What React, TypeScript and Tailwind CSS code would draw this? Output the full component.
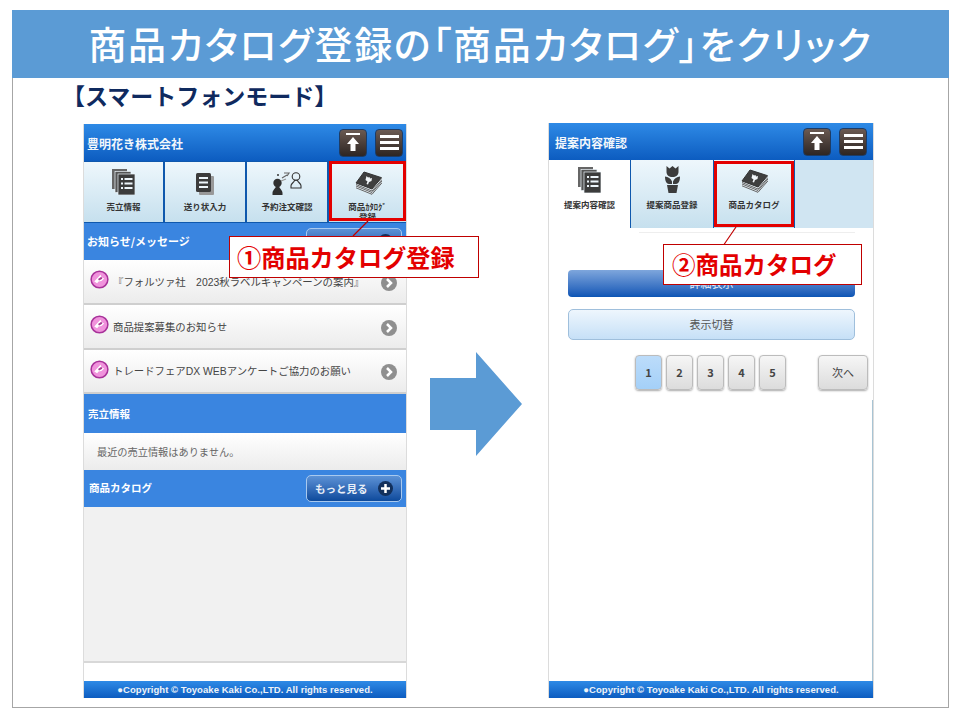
import React from 'react';

const JP = "font-['Noto_Sans_CJK_JP','Noto_Sans',sans-serif]";

const PagesIcon = () => (
  <svg width="23" height="26" viewBox="0 0 23 26">
    <rect x="0" y="0" width="15" height="20" fill="#666" />
    <rect x="3" y="2.500" width="16" height="21" fill="#555" stroke="#eef6fb" strokeWidth="0.7" />
    <rect x="6" y="5" width="17" height="21" fill="#3c3c3c" stroke="#eef6fb" strokeWidth="0.7" />
    <g fill="#eef6fb">
      <rect x="9" y="9" width="2" height="2" />
      <rect x="12.500" y="9" width="8" height="2" />
      <rect x="9" y="13.500" width="2" height="2" />
      <rect x="12.500" y="13.500" width="8" height="2" />
      <rect x="9" y="18" width="2" height="2" />
      <rect x="12.500" y="18" width="8" height="2" />
    </g>
  </svg>
);

const DocIcon = () => (
  <svg width="18" height="22" viewBox="0 0 18 22">
    <rect x="3" y="3" width="15" height="19" rx="1" fill="#999" />
    <rect x="0" y="0" width="15" height="19" rx="1.500" fill="#3c3c3c" />
    <g fill="#eef6fb">
      <rect x="3" y="4" width="9" height="2" />
      <rect x="3" y="8.500" width="9" height="2" />
      <rect x="3" y="13" width="9" height="2" />
    </g>
  </svg>
);

const PeopleIcon = () => (
  <svg width="30" height="24" viewBox="0 0 30 24">
    <circle cx="5.500" cy="12" r="4.200" fill="#2f2f2f" />
    <path d="M4 15h3c.3 2.500 3.500 4 3.500 7v2H.500v-2c0-3 3.200-4.500 3.500-7z" fill="#2f2f2f" />
    <circle cx="24" cy="5.500" r="3.800" fill="none" stroke="#333" strokeWidth="1.100" />
    <path d="M22.500 9.300h3c.3 2 3.500 3.200 3.500 5.500V17H19v-2.200c0-2.300 3.200-3.500 3.500-5.500z" fill="none" stroke="#333" strokeWidth="1.100" />
    <circle cx="6" cy="4" r="1" fill="#333" />
    <path d="M10 7l5-3M12 2l5 0-2 3" fill="none" stroke="#666" strokeWidth="1.200" />
    <path d="M9 10l5-2" fill="none" stroke="#999" strokeWidth="1.200" />
  </svg>
);

const BookIcon = () => (
  <svg width="28" height="24" viewBox="0 0 28 24">
    <path d="M2 12v5l16 6.500L28 12V7z" fill="#e9f1f6" />
    <path d="M2 13.500 18 20 28 8.500M2 15 18 21.500 28 10M2 16.800 18 23.300 28 11.800" fill="none" stroke="#555" strokeWidth="0.900" />
    <path d="M10 1 27.600 6.700 18 18 2 12z" fill="#3f3f3f" stroke="#333" strokeWidth="1" strokeLinejoin="round" />
    <path d="M12.500 5l1.500 1.500 1.500-.5.500 1.500 2-.5-.5 3-2.500 1-1 2.500-1.500-.5 1-2.500-2-1.500z" fill="#f3f7fa" />
  </svg>
);

const TulipIcon = () => (
  <svg width="15" height="27" viewBox="0 0 15 27" fill="#3c3c3c">
    <path d="M1.500 0l3 2.500L7.500 0l3 2.500 3-2.500v6c0 3-2.500 5-6 5s-6-2-6-5z" />
    <path d="M0 10.500c3 .3 6 2 7 5V18H4c-3 0-4-4-4-7.500zM15 10.500c-3 .3-6 2-7 5V18h3c3 0 4-4 4-7.500z" />
    <path d="M2 19h11l-1.500 8h-8z" />
  </svg>
);

const ArrowUpButton = () => (
  <span className="flex h-[28px] w-[28px] flex-col items-center justify-center rounded-[4px] border border-[#1d3c66] bg-gradient-to-b from-[#6b5a52] to-[#2e2623]">
    <svg width="16" height="20" viewBox="0 0 16 20" fill="#fff">
      <rect x="1" y="0" width="14" height="2" />
      <path d="M8 4l6 7h-3.500v7h-5v-7H2z" />
    </svg>
  </span>
);

const MenuButton = () => (
  <span className="flex h-[28px] w-[28px] flex-col items-center justify-center gap-[3px] rounded-[4px] border border-[#1d3c66] bg-gradient-to-b from-[#6b5a52] to-[#2e2623]">
    <span className="h-[3px] w-[19px] bg-white" />
    <span className="h-[3px] w-[19px] bg-white" />
    <span className="h-[3px] w-[19px] bg-white" />
  </span>
);

const Header = ({ title, className }: { title: string; className: string }) => (
  <div className={`flex h-[37px] items-center justify-between bg-gradient-to-b from-[#2e8ae6] to-[#0c5cc0] ${className}`}>
    <span className="pt-[3px] text-[12px] font-bold text-[#f3f7fb]">{title}</span>
    <div className="flex gap-[8px]">
      <ArrowUpButton />
      <MenuButton />
    </div>
  </div>
);

const Tab = ({ label, icon, className, active }: { label: React.ReactNode; icon: React.ReactNode; className: string; active?: boolean }) => (
  <div className={`flex flex-col items-center ${active ? 'bg-white' : 'bg-gradient-to-b from-[#eef7fc] to-[#c6e0ee]'} ${className}`}>
    <div className="flex h-[29px] items-end">{icon}</div>
    <div className="mt-[6px] text-center text-[8.500px] leading-[11px] font-bold text-[#333]">{label}</div>
  </div>
);

const Bullet = () => (
  <svg width="19" height="19" viewBox="0 0 20 20" className="shrink-0">
    <circle cx="10" cy="10" r="8.800" fill="#f093dc" stroke="#a8329a" strokeWidth="1.600" />
    <path d="M4.500 12 11 5l1.500 3 2.500 1-3 2.500-3 .5-1.500 2z" fill="#fff" />
    <path d="M8.500 9.500l3.500-2.500 1 2.300-3.500 1.700z" fill="#a63a92" />
  </svg>
);

const Chevron = () => (
  <svg width="16" height="16" viewBox="0 0 16 16" className="mt-[2px] shrink-0">
    <circle cx="8" cy="8" r="8" fill="#8f8f8f" />
    <path d="M6 4l4 4-4 4" fill="none" stroke="#fff" strokeWidth="2.500" />
  </svg>
);

const NoticeRow = ({ text, className }: { text: string; className: string }) => (
  <div className={`flex items-center border-b-2 border-[#cfcfcf] bg-gradient-to-b from-white to-[#ececec] pr-[9px] pl-[6px] ${className}`}>
    <div className="-mt-[4px]"><Bullet /></div>
    <span className="ml-[4px] flex-1 pt-[2px] font-['Liberation_Sans','Noto_Sans_CJK_JP',sans-serif] text-[10.400px] whitespace-pre text-[#444]">{text}</span>
    <Chevron />
  </div>
);

const MoreButton = () => (
  <span className="flex h-[27px] w-[96px] items-center justify-between rounded-[5px] border border-[#a9c9ee] bg-gradient-to-b from-[#5c92d6] to-[#0c4a9c] pr-[8px] pl-[8px] text-[10.500px] text-[#e8eff8]">
    <span>もっと見る</span>
    <svg width="15" height="15" viewBox="0 0 15 15">
      <circle cx="7.500" cy="7.500" r="7.500" fill="#12305c" />
      <path d="M7.500 3v9M3 7.500h9" stroke="#fff" strokeWidth="2.500" />
    </svg>
  </span>
);

const Footer = () => (
  <div className="flex h-[17px] items-center justify-center bg-gradient-to-b from-[#2e8ae6] to-[#0c5cc0] pt-[2px] font-['Liberation_Sans',sans-serif] text-[9.500px] font-bold tracking-[0.05px] text-[#eef3f8]">
    ●Copyright © Toyoake Kaki Co.,LTD. All rights reserved.
  </div>
);

const Callout = ({ text, className }: { text: string; className: string }) => (
  <div className={`absolute flex items-center border border-[#c00000] bg-white font-bold text-[#e30000] ${className}`}>
    {text}
  </div>
);

const PageButton = ({ label, active }: { label: string; active?: boolean }) => (
  <span className={`flex h-[35px] w-[27px] items-center justify-center rounded-[4px] border border-[#bcbcbc] text-[11px] font-bold text-[#444] shadow-[0_1px_2px_#aaa] ${active ? 'bg-gradient-to-b from-[#bcdcfa] to-[#a4d0f8]' : 'bg-gradient-to-b from-[#f6f6f6] to-[#dcdcdc]'}`}>
    {label}
  </span>
);

export default function App() {
  return (
    <div className={`h-[720px] w-[960px] bg-white pt-[10px] pl-[12px] ${JP}`}>
      <div className="h-[698px] w-[937px] border-x border-b border-[#a6a6a6]">
        <div className="-mx-px flex h-[68px] items-center justify-center bg-[#5b9bd5] pb-[3px] text-[38px] font-medium tracking-[1.700px] text-white [font-feature-settings:'palt']">
          商品カタログ登録の「商品カタログ」をクリック
        </div>
        <div className="h-[45px] pl-[49px] text-[23px] leading-[34px] font-bold text-[#0f2a5f]">【スマートフォンモード】</div>

        <div className="flex h-[575px] items-start pl-[70px]">
          {/* left phone */}
          <div className="relative mt-px flex h-[574px] w-[324px] flex-col border-x border-[#dcdcdc]">
            <Header title="豊明花き株式会社" className="pr-[3px] pl-[3px]" />
            <div className="flex h-[62px] gap-[2px] bg-[#0f58ad] pt-px pb-px">
              <Tab label="売立情報" icon={<PagesIcon />} className="w-[79px] pt-[4px]" />
              <Tab label="送り状入力" icon={<DocIcon />} className="w-[80px] pt-[4px]" />
              <Tab label="予約注文確認" icon={<PeopleIcon />} className="w-[80px] pt-[4px]" />
              <Tab label={<>商品ｶﾀﾛｸﾞ<br /><span className="block -mt-px">登録</span></>} icon={<BookIcon />} className="flex-1 pt-[4px]" />
            </div>
            <div className="flex h-[37px] items-center justify-between bg-[#3a85e0] pr-[4px] pl-[3px] text-[11px] font-bold text-white">
              <span>お知らせ/メッセージ</span>
              <MoreButton />
            </div>
            <NoticeRow text="『フォルツァ社　2023秋ラベルキャンペーンの案内』" className="h-[45px]" />
            <NoticeRow text="商品提案募集のお知らせ" className="h-[45px]" />
            <NoticeRow text="トレードフェアDX WEBアンケートご協力のお願い" className="h-[44px]" />
            <div className="flex h-[39px] items-center bg-[#3a85e0] pl-[4px] text-[10.500px] font-bold text-white">売立情報</div>
            <div className="flex h-[37px] items-center bg-gradient-to-b from-white to-[#ececec] pl-[13px] text-[10.200px] text-[#666]">最近の売立情報はありません。</div>
            <div className="flex h-[37px] items-center justify-between bg-[#3a85e0] pr-[4px] pl-[5px] text-[10.500px] font-bold text-white">
              <span className="-mt-[2px]">商品カタログ</span>
              <MoreButton />
            </div>
            <div className="h-[156px] border-b-2 border-[#d8d8d8] bg-[#f1f1f1]" />
            <div className="flex-1 bg-white" />
            <Footer />

            {/* red highlight and callout */}
            <div className="absolute top-[37px] left-[245px] h-[60px] w-[77px] border-[3px] border-[#e30000]" />
            <svg width="30" height="20" viewBox="0 0 30 20" className="absolute top-[96px] left-[263px]">
              <line x1="21" y1="1" x2="6" y2="16" stroke="#c00000" strokeWidth="1.200" />
            </svg>
            <Callout text="①商品カタログ登録" className="top-[112px] left-[145px] h-[42px] w-[250px] pl-[7px] text-[24.200px]" />
          </div>

          {/* arrow */}
          <svg width="92" height="104" viewBox="0 0 92 104" className="mt-[229px] ml-[23px] shrink-0">
            <path d="M0 26h46V0l46 52-46 52V78H0z" fill="#5b9bd5" />
          </svg>

          {/* right phone */}
          <div className="relative ml-[26px] flex h-[575px] w-[326px] flex-col border-x border-[#dcdcdc]">
            <Header title="提案内容確認" className="pr-[6px] pl-[6px]" />
            <div className="flex h-[68px] bg-[#d0e5f2]">
              <Tab label="提案内容確認" icon={<PagesIcon />} className="w-[81px] pt-[4px]" active />
              <Tab label="提案商品登録" icon={<TulipIcon />} className="w-[83px] border-l border-[#0f58ad] pt-[4px]" />
              <Tab label="商品カタログ" icon={<BookIcon />} className="w-[82px] border-x border-[#0f58ad] pt-[4px]" />
            </div>
            <div className="flex flex-1 flex-col">
              <div className="mt-[4px] mr-[18px] ml-[90px] h-px bg-[#eeeeee]" />
              <div className="mt-[37px] mr-[18px] ml-[19px] flex h-[27px] items-center justify-center rounded-[4px] bg-gradient-to-b from-[#7ea6dc] to-[#0a55b5] text-[11px] text-[#e8eff8]">詳細表示</div>
              <div className="mt-[12px] mr-[18px] ml-[19px] flex h-[31px] items-center justify-center rounded-[5px] border border-[#9fbfdc] bg-gradient-to-b from-[#eef6fd] to-[#c6e0f7] text-[11px] text-[#555]">表示切替</div>
              <div className="mt-[15px] flex items-start pl-[86px]">
                <div className="flex gap-[4px]">
                  <PageButton label="1" active />
                  <PageButton label="2" />
                  <PageButton label="3" />
                  <PageButton label="4" />
                  <PageButton label="5" />
                </div>
                <span className="ml-[32px] flex h-[35px] w-[50px] items-center justify-center rounded-[4px] border border-[#bcbcbc] bg-gradient-to-b from-[#f6f6f6] to-[#dcdcdc] text-[11px] text-[#444] shadow-[0_1px_2px_#aaa]">次へ</span>
              </div>
              <div className="mt-[10px] flex-1 border-r border-[#a8c4d4]" />
            </div>
            <Footer />

            {/* red highlight and callout */}
            <div className="absolute top-[38px] left-[165px] h-[66px] w-[80px] border-[3px] border-[#e30000]" />
            <svg width="30" height="22" viewBox="0 0 30 22" className="absolute top-[103px] left-[170px]">
              <line x1="17" y1="1" x2="4" y2="20" stroke="#c00000" strokeWidth="1.200" />
            </svg>
            <Callout text="②商品カタログ" className="top-[121px] left-[114px] h-[41px] w-[199px] pl-[8px] text-[23.500px]" />
          </div>
        </div>
      </div>
    </div>
  );
}
